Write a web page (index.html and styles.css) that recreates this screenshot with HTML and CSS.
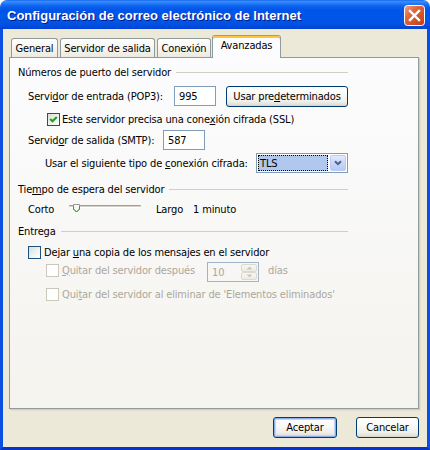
FILE: index.html
```html
<!DOCTYPE html>
<html lang="es">
<head>
<meta charset="utf-8">
<title>Configuración de correo electrónico de Internet</title>
<link rel="stylesheet" href="styles.css">
</head>
<body>
<div class="window">
  <div class="titlebar">
    <span class="title">Configuración de correo electrónico de Internet</span>
    <span class="close">
      <svg width="21" height="21" viewBox="0 0 21 21">
        <defs>
          <linearGradient id="cg" x1="0" y1="0" x2="1" y2="1">
            <stop offset="0" stop-color="#EFA58B"/>
            <stop offset="0.35" stop-color="#E0683F"/>
            <stop offset="1" stop-color="#C23A10"/>
          </linearGradient>
        </defs>
        <rect x="0.5" y="0.5" width="20" height="20" rx="3" fill="url(#cg)" stroke="#FFFFFF"/>
        <path d="M6 6 L15 15 M15 6 L6 15" stroke="#FFFFFF" stroke-width="2.4" stroke-linecap="square"/>
      </svg>
    </span>
  </div>
  <div class="client">
    <div class="tabs">
      <div class="tab t1">General</div>
      <div class="tab t2">Servidor de salida</div>
      <div class="tab t3">Conexión</div>
      <div class="tab sel">Avanzadas</div>
    </div>
    <div class="panel">
      <div class="rows">
        <div class="group"><span>Números de puerto del servidor</span><i class="rule"></i></div>

        <div class="row h20 mt7 ind1">
          <span class="lbl w146">Servi<u>d</u>or de entrada (POP3):</span>
          <span class="edit">995</span>
          <span class="btn wide">Usar pre<u>d</u>eterminados</span>
        </div>

        <div class="row h16 mt5 ind-ssl">
          <span class="cb"><svg width="11" height="11" viewBox="0 0 11 11"><polyline points="2.2,5 4.5,7.3 8.8,3" fill="none" stroke="#21A121" stroke-width="2.2"/></svg></span>
          <span class="lbl ml2">Este servidor precisa una cone<u>x</u>ión cifrada (SSL)</span>
        </div>

        <div class="row h20 mt3 ind1">
          <span class="lbl w135">Servid<u>o</u>r de salida (SMTP):</span>
          <span class="edit">587</span>
        </div>

        <div class="row h20 mt3 ind2">
          <span class="lbl w211">Usar el siguiente tipo de <u>c</u>onexión cifrada:</span>
          <span class="select">
            <span class="sel-val">TLS</span>
            <span class="drop"><svg width="8" height="6" viewBox="0 0 8 6"><polyline points="1,1.2 4,4.2 7,1.2" fill="none" stroke="#4D6185" stroke-width="2"/></svg></span>
          </span>
        </div>

        <div class="group mt9"><span>Tie<u>m</u>po de espera del servidor</span><i class="rule"></i></div>

        <div class="row h16 mt5 ind1">
          <span class="lbl w41">Corto</span>
          <span class="slider">
            <span class="track"></span>
            <span class="thumb"><svg width="8" height="9" viewBox="0 0 8 9"><path d="M0.5 0.5 H6.5 V5 L3.5 8 L0.5 5 Z" fill="#F7F7F3" stroke="#9A9B98"/><path d="M0.5 2.5 V5 L3.5 8 L6.5 5 V2.5" fill="none" stroke="#21A121"/></svg></span>
          </span>
          <span class="lbl w37 ml15">Largo</span>
          <span class="lbl">1 minuto</span>
        </div>

        <div class="group mt7"><span>Entrega</span><i class="rule"></i></div>

        <div class="row h16 mt6 ind1">
          <span class="cb"></span>
          <span class="lbl ml3">Dejar <u>u</u>na copia de los mensajes en el servidor</span>
        </div>

        <div class="row h16 mt2 ind3 dis">
          <span class="cb off"></span>
          <span class="lbl ml3 w145"><u>Q</u>uitar del servidor después</span>
          <span class="spin">
            <span class="spin-val">10</span>
            <span class="arrows">
              <span class="arr"><svg width="7" height="4" viewBox="0 0 7 4"><path d="M0.5 3.5 L3.5 0.5 L6.5 3.5 Z" fill="#C9C7BA"/></svg></span>
              <span class="arr"><svg width="7" height="4" viewBox="0 0 7 4"><path d="M0.5 0.5 L3.5 3.5 L6.5 0.5 Z" fill="#C9C7BA"/></svg></span>
            </span>
          </span>
          <span class="lbl ml9">días</span>
        </div>

        <div class="row h16 mt8 ind3 dis">
          <span class="cb off"></span>
          <span class="lbl ml3">Qui<u>t</u>ar del servidor al eliminar de 'Elementos eliminados'</span>
        </div>
      </div>
    </div>
    <div class="footer">
      <span class="btn def w64">Aceptar</span>
      <span class="btn w63">Cancelar</span>
    </div>
  </div>
</div>
</body>
</html>
```

FILE: styles.css
```css
* { box-sizing: border-box; }
html, body { margin: 0; padding: 0; background: #ffffff; }
body {
  width: 430px;
  height: 450px;
  overflow: hidden;
  font-family: Tahoma, "DejaVu Sans Condensed", "Liberation Sans", sans-serif;
  font-size: 11px;
  letter-spacing: -0.15px;
  color: #000000;
}
u { text-decoration: underline; text-underline-offset: 1px; }

.window {
  width: 430px;
  height: 450px;
  display: flex;
  flex-direction: column;
}

.titlebar {
  height: 29px;
  flex: none;
  display: flex;
  align-items: center;
  padding: 0 5px 0 7px;
  border-radius: 7px 7px 0 0;
  background: linear-gradient(180deg, #0A58E6 0px, #3B8FFC 1px, #2A80F8 3px, #0D63EE 6px, #0055E8 10px, #0056EA 18px, #0052E3 24px, #0049DB 27px, #0442D3 29px);
}
.title {
  flex: 1;
  font-family: "Liberation Sans", Arial, sans-serif;
  font-weight: bold;
  font-size: 13px;
  letter-spacing: 0;
  color: #ffffff;
  text-shadow: 1px 1px 0 #0A1883;
  white-space: nowrap;
  padding-top: 1px;
}
.close { width: 21px; height: 21px; flex: none; display: block; margin-top: 2px; }
.close svg { display: block; }

.client {
  flex: 1;
  background: #ECE9D8;
  border: 3px solid #0B4FE2;
  border-top: 0;
  border-bottom-color: #0733C6;
  display: flex;
  flex-direction: column;
}

.tabs {
  display: flex;
  align-items: flex-end;
  height: 22px;
  margin: 6px 0 0 8px;
}
.tab {
  height: 19px;
  border: 1px solid #919B9C;
  border-bottom: 0;
  border-radius: 3px 3px 0 0;
  background: linear-gradient(180deg, #FFFFFF 0%, #F6F5F1 50%, #ECEAE0 100%);
  display: flex;
  align-items: center;
  justify-content: center;
  margin-right: 2px;
  white-space: nowrap;
  flex: none;
}
.t1 { width: 47px; }
.t2 { width: 95px; }
.t3 { width: 54px; margin-right: 1px; }
.tab.sel {
  width: 69px;
  height: 23px;
  margin-bottom: -1px;
  position: relative;
  z-index: 2;
  background: #FCFCFE;
  border-top: 1px solid #E68B2C;
  box-shadow: inset 0 2px 0 #FFC73C;
  padding-bottom: 3px;
  margin-right: 0;
}

.panel {
  position: relative;
  margin-left: 6px;
  width: 410px;
  height: 352px;
  flex: none;
  border: 1px solid #919B9C;
  box-shadow: 1px 1px 0 #D0CEBF, 2px 2px 0 #E3E0D0;
  background: linear-gradient(180deg, #FCFCFE 0%, #F4F3EE 100%);
  padding: 7px 0 0 8px;
}
.rows { width: 330px; display: flex; flex-direction: column; }

.group { display: flex; align-items: center; height: 14px; white-space: nowrap; }
.group .rule { flex: 1; height: 1px; background: #D0D0BF; margin-left: 5px; margin-top: 1px; }

.row { display: flex; align-items: center; white-space: nowrap; }
.h16 { height: 16px; }
.h20 { height: 20px; }
.mt2 { margin-top: 2px; }
.mt3 { margin-top: 3px; }
.mt5 { margin-top: 5px; }
.mt6 { margin-top: 6px; }
.mt7 { margin-top: 7px; }
.mt8 { margin-top: 8px; }
.mt9 { margin-top: 9px; }
.ind1 { padding-left: 10px; }
.ind2 { padding-left: 27px; }
.ind3 { padding-left: 28px; }
.ind-ssl { padding-left: 29px; }
.ml2 { margin-left: 2px; }
.ml3 { margin-left: 3px; }
.ml9 { margin-left: 9px; }
.ml15 { margin-left: 15px; }

.lbl { flex: none; }
.w37 { width: 37px; }
.w41 { width: 41px; }
.w135 { width: 135px; }
.w145 { width: 145px; }
.w146 { width: 146px; }
.w211 { width: 211px; }

.dis { color: #ACA899; }

.edit {
  width: 42px;
  height: 20px;
  flex: none;
  border: 1px solid #7F9DB9;
  background: #FFFFFF;
  padding-left: 4px;
  display: flex;
  align-items: center;
}

.btn {
  height: 21px;
  flex: none;
  border: 1px solid #003C74;
  border-radius: 3px;
  background: linear-gradient(180deg, #FFFFFF 0%, #FAFAF8 35%, #F0EFEA 75%, #E3E1D8 92%, #D6D0C5 100%);
  display: flex;
  align-items: center;
  justify-content: center;
  white-space: nowrap;
}
.btn.wide { width: 122px; margin-left: 10px; }
.btn.def {
  box-shadow: inset 0 0 0 1px #8FAEEA, inset 0 0 0 2px #C2D3F8;
}
.w64 { width: 64px; }
.w63 { width: 63px; }

.cb {
  width: 13px;
  height: 13px;
  flex: none;
  border: 1px solid #1C5180;
  background: linear-gradient(135deg, #DCDCD7 0%, #F2F2EF 55%, #FFFFFF 100%);
  display: flex;
  align-items: center;
  justify-content: center;
}
.cb svg { display: block; }
.cb.off { border-color: #CAC8BB; background: #FFFFFF; }

.select {
  width: 92px;
  height: 20px;
  flex: none;
  border: 1px solid #7F9DB9;
  background: #FFFFFF;
  padding: 1px;
  display: flex;
  align-items: stretch;
}
.sel-val {
  flex: 1;
  margin: 0 2px 0 0;
  background: #B0C8EE;
  outline: 1px dotted #000000;
  outline-offset: -1px;
  padding-left: 2px;
  display: flex;
  align-items: center;
}
.drop {
  width: 16px;
  flex: none;
  border: 1px solid #B9CCF4;
  border-radius: 2px;
  background: linear-gradient(180deg, #E2EAFD 0%, #C8D7FA 50%, #B6C9F5 100%);
  display: flex;
  align-items: center;
  justify-content: center;
}
.drop svg { display: block; }

.slider { position: relative; width: 72px; height: 16px; flex: none; }
.track {
  position: absolute;
  left: 0;
  right: 0;
  top: 4px;
  height: 3px;
  border-top: 1px solid #A09F99;
  border-bottom: 1px solid #FFFFFF;
  background: #D3D1C7;
  border-radius: 1px;
}
.thumb { position: absolute; left: 4px; top: 3px; width: 8px; height: 9px; }
.thumb svg { display: block; }

.spin {
  width: 52px;
  height: 20px;
  flex: none;
  align-self: flex-start;
  border: 1px solid #9FB3C9;
  padding: 1px 1px 1px 4px;
  display: flex;
  align-items: center;
}
.spin-val { flex: 1; }
.arrows { width: 16px; height: 16px; display: flex; flex-direction: column; }
.arr {
  flex: 1;
  border: 1px solid #DCDAD0;
  border-radius: 2px;
  background: linear-gradient(180deg, #F8F7F3 0%, #ECEAE2 100%);
  display: flex;
  align-items: center;
  justify-content: center;
}
.arr svg { display: block; }

.footer {
  display: flex;
  justify-content: flex-end;
  gap: 19px;
  margin-top: 8px;
  padding-right: 8px;
}
```
